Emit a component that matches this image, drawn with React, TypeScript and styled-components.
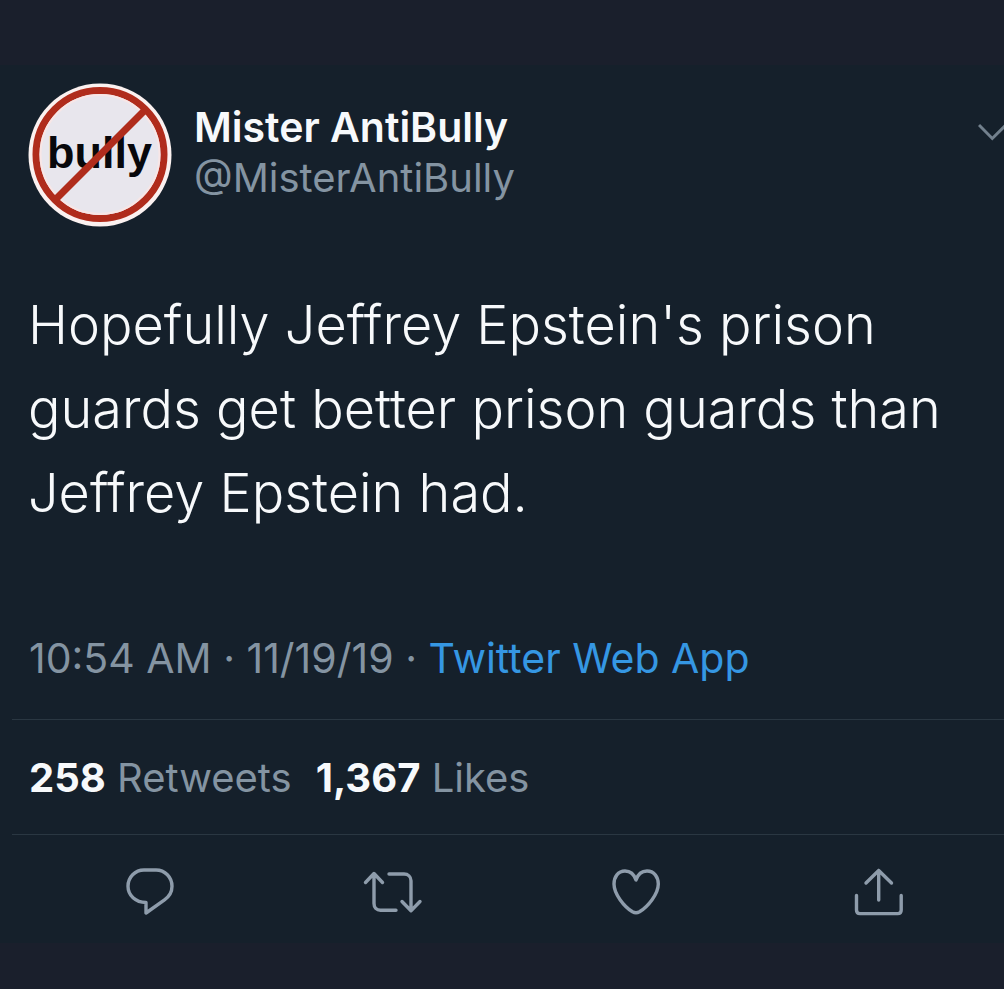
import React from "react";
import styled, { createGlobalStyle } from "styled-components";

const GlobalStyle = createGlobalStyle`
  * { box-sizing: border-box; }
  body {
    margin: 0;
    background: #1a1f2c;
    font-family: Inter, "Liberation Sans", sans-serif;
  }
`;

const Page = styled.main`
  min-height: 100vh;
  padding: 65px 0 46px;
  overflow: hidden;
`;

const Tweet = styled.article`
  background: #15202b;
  color: #f7f9fb;
  padding: 18px 0 19px;
`;

const Header = styled.header`
  display: flex;
  align-items: flex-start;
  padding-left: 28px;
`;

const Avatar = styled.svg`
  width: 144px;
  height: 144px;
  flex: none;
`;

const Names = styled.div`
  display: flex;
  flex: 1;
  flex-direction: column;
  margin-left: 22px;
  padding-top: 19px;
`;

const Name = styled.strong`
  font-size: 41px;
  line-height: 50px;
  font-weight: 600;
`;

const Handle = styled.span`
  font-size: 40px;
  line-height: 52px;
  color: #8494a2;
  font-weight: 400;
`;

const IconButton = styled.button`
  display: flex;
  padding: 0;
  border: 0;
  background: none;
  color: #8e9cab;
  cursor: pointer;
`;

const MenuButton = styled(IconButton)`
  margin-top: 36px;
`;

const Body = styled.p`
  margin: 0;
  padding: 56px 28px 98px;
  font-size: 54px;
  line-height: 84px;
  font-weight: 300;
`;

const Meta = styled.div`
  padding: 0 29px 36px;
  font-size: 41px;
  line-height: 50px;
  font-weight: 400;
  color: #8494a2;
`;

const SourceLink = styled.a`
  color: #3597e3;
  text-decoration: none;
`;

const Stats = styled.div`
  display: flex;
  gap: 24px;
  margin-left: 12px;
  padding: 33px 17px 31px;
  border-top: 1px solid #2a3742;
  border-bottom: 1px solid #2a3742;
  font-size: 40px;
  line-height: 50px;
`;

const Stat = styled.span`
  color: #8494a2;
  font-weight: 400;
`;

const Count = styled.b`
  color: #f7f9fb;
  font-weight: 700;
`;

const Actions = styled.div`
  display: grid;
  grid-template-columns: repeat(4, 1fr);
  justify-items: center;
  padding: 25px 4px 0 29px;
`;

const Icon = ({ d }: { d: string }) => (
  <svg
    width="64"
    height="64"
    viewBox="0 0 64 64"
    fill="none"
    stroke="currentColor"
    strokeWidth="3.4"
    strokeLinecap="round"
    strokeLinejoin="round"
    aria-hidden="true"
  >
    <path d={d} />
  </svg>
);

const actions = [
  {
    label: "Reply",
    d: "M28 42.5C17.5 42.5 10 35.3 10 26.3S17 10 26 10H38C47 10 54 17.2 54 26.3C54 32 51.2 36.6 46.5 39.8L28 53Z",
  },
  {
    label: "Retweet",
    d: "M4.5 22.5L13 13.5L21.5 22.5M13 14V43.5C13 47.5 15.5 50.2 19.5 50.2H35M28 14H43C47 14 50 16.8 50 20.8V50M41 41.5L50 50.8L59 41.5",
  },
  {
    label: "Like",
    d: "M32 20C30 14 26 11 21 11C14 11 10 17 10 24C10 34 20 46.5 28.5 51.8C31 53.2 33 53.2 35.5 51.8C44 46.5 54.3 34 54.3 24C54.3 17 50 11 43 11C38 11 34 14 32 20Z",
  },
  {
    label: "Share",
    d: "M31.7 10.5V40M19 23L31.7 10.5L44.5 23M9.5 35.5V50C9.5 52.4 10.7 53.6 13 53.6H50.7C53 53.6 54.2 52.4 54.2 50V35.5",
  },
];

export default function App() {
  return (
    <>
      <GlobalStyle />
      <Page>
        <Tweet>
          <Header>
            <Avatar viewBox="0 0 144 144" role="img" aria-label="Mister AntiBully">
              <circle cx="72" cy="72" r="71.5" fill="#fbf1f0" />
              <circle cx="72" cy="71.5" r="64" fill="#e8e6ed" stroke="#b02c1c" strokeWidth="7" />
              <circle cx="72" cy="71.5" r="59.5" fill="none" stroke="#f8e6e6" strokeWidth="2" />
              <text
                x="19"
                y="85"
                fontFamily="Liberation Sans, Arial, sans-serif"
                fontSize="45"
                fontWeight="700"
                fill="#08080c"
              >
                bully
              </text>
              <path d="M118 26L27 117" stroke="#b02c1c" strokeWidth="7" />
            </Avatar>
            <Names>
              <Name>Mister AntiBully</Name>
              <Handle>@MisterAntiBully</Handle>
            </Names>
            <MenuButton aria-label="More options">
              <svg width="26" height="26" viewBox="0 0 26 26" fill="none" stroke="#72808d" strokeWidth="3" aria-hidden="true">
                <path d="M1 6L14.3 19.5L28 6" />
              </svg>
            </MenuButton>
          </Header>
          <Body>
            Hopefully Jeffrey Epstein's prison guards get better prison guards than Jeffrey Epstein had.
          </Body>
          <Meta>
            <time>10:54 AM · 11/19/19</time> · <SourceLink href="#source">Twitter Web App</SourceLink>
          </Meta>
          <Stats>
            <Stat>
              <Count>258</Count> Retweets
            </Stat>
            <Stat>
              <Count>1,367</Count> Likes
            </Stat>
          </Stats>
          <Actions>
            {actions.map((action) => (
              <IconButton key={action.label} aria-label={action.label}>
                <Icon d={action.d} />
              </IconButton>
            ))}
          </Actions>
        </Tweet>
      </Page>
    </>
  );
}
